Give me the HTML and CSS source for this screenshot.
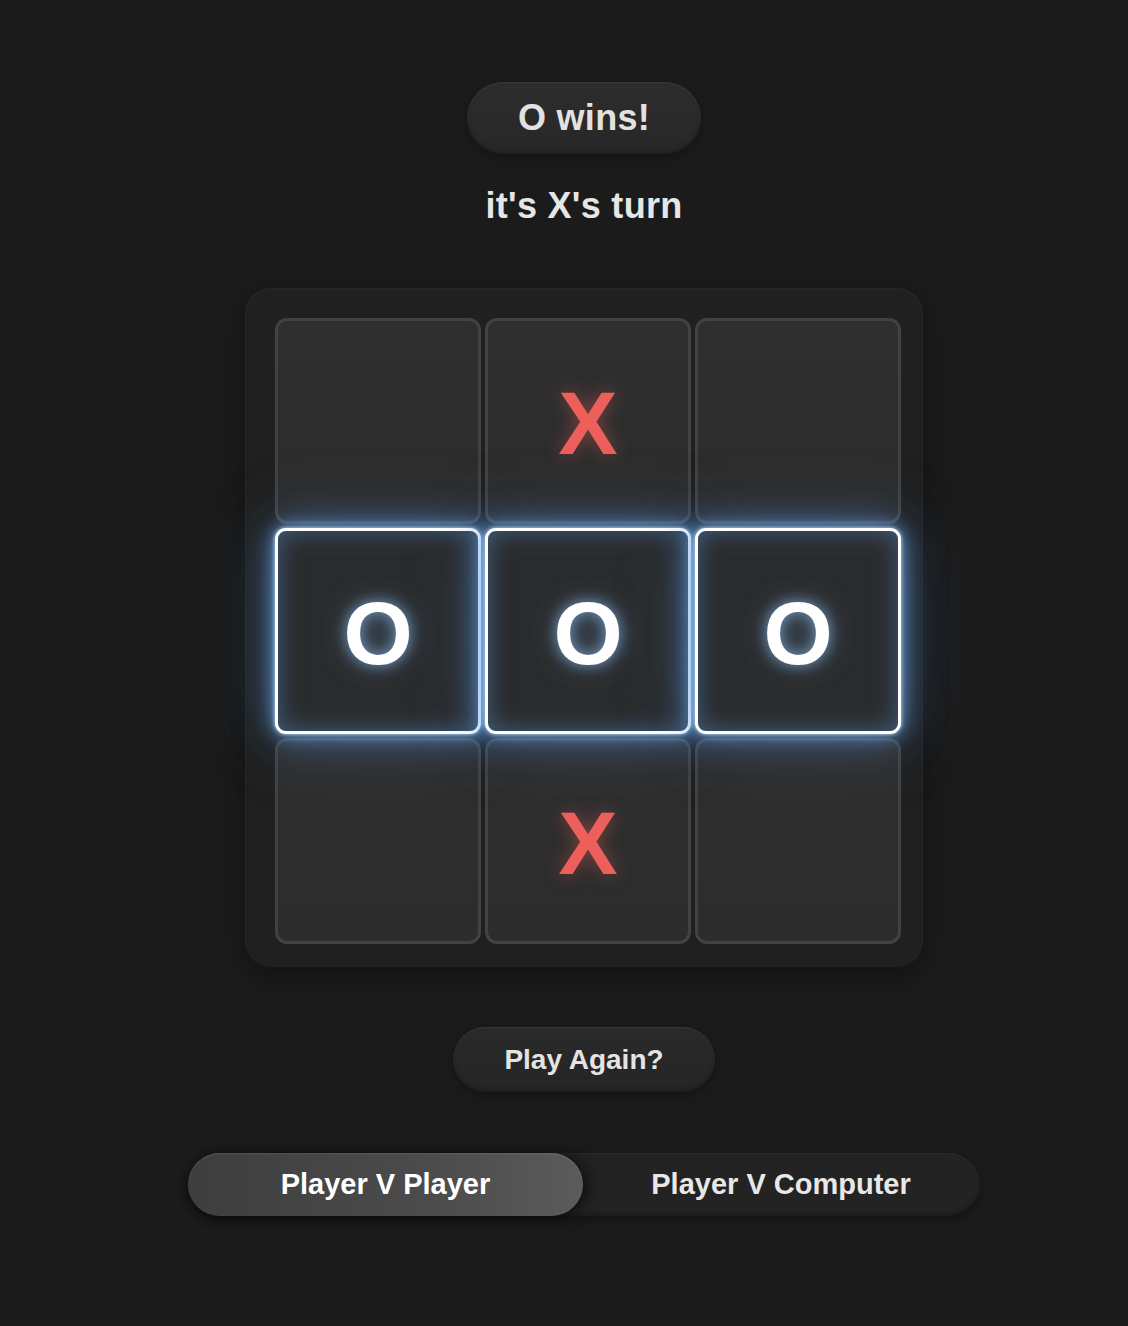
FILE: index.html
```html
<!DOCTYPE html>
<html>
<head>
<meta charset="utf-8">
<link rel="stylesheet" href="styles.css">
</head>
<body>
<main class="app">
  <div class="status">O wins!</div>
  <div class="turn">it's X's turn</div>
  <div class="board">
    <div class="cell"></div>
    <div class="cell x">X</div>
    <div class="cell"></div>
    <div class="cell o win">O</div>
    <div class="cell o win">O</div>
    <div class="cell o win">O</div>
    <div class="cell"></div>
    <div class="cell x">X</div>
    <div class="cell"></div>
  </div>
  <button class="again">Play Again?</button>
  <div class="mode">
    <div class="seg active">Player V Player</div>
    <div class="seg">Player V Computer</div>
  </div>
</main>
</body>
</html>
```

FILE: styles.css
```css
* { box-sizing: border-box; }
html, body { margin: 0; padding: 0; background: #1b1b1b; }
body {
  font-family: "Liberation Sans", Arial, sans-serif;
  font-weight: bold;
  color: #e4e4e4;
  height: 1326px;
  overflow: hidden;
}
.app {
  display: flex;
  flex-direction: column;
  align-items: center;
  padding-top: 82px;
  padding-left: 40px;
}
.status {
  width: 234px;
  height: 72px;
  border-radius: 36px;
  background: linear-gradient(180deg, #2d2d2d 0%, #272727 100%);
  box-shadow: inset 0 1px 2px rgba(255,255,255,0.08), inset 0 -2px 4px rgba(0,0,0,0.25), 0 4px 10px rgba(0,0,0,0.25);
  display: flex;
  align-items: center;
  justify-content: center;
  font-size: 36px;
  color: #e2e2e2;
  letter-spacing: 0.3px;
}
.turn {
  margin-top: 31px;
  font-size: 36px;
  line-height: 41px;
  color: #e6e6e6;
  letter-spacing: 0.3px;
}
.board {
  margin-top: 62px;
  width: 678px;
  height: 679px;
  padding: 30px 22px 23px 30px;
  border-radius: 26px;
  background: #202020;
  box-shadow: inset 0 1px 3px rgba(255,255,255,0.06), 0 8px 24px rgba(0,0,0,0.35);
  display: grid;
  grid-template-columns: repeat(3, 206px);
  grid-template-rows: repeat(3, 206px);
  gap: 4px;
}
.cell {
  border: 3px solid #424242;
  border-radius: 12px;
  background: linear-gradient(180deg, #2f2f2f 0%, #2c2c2c 100%);
  display: flex;
  align-items: center;
  justify-content: center;
  font-size: 89px;
  line-height: 1;
}
.cell.x {
  color: #ec5f5b;
  text-shadow: 0 0 18px rgba(236,95,91,0.45);
  padding-top: 4px;
}
.cell.o {
  color: #ffffff;
  padding-top: 4px;
}
.cell.win {
  position: relative;
  z-index: 1;
  border-color: #ffffff;
  border-radius: 11px;
  background: #2a2b2c;
  box-shadow: 0 0 4px rgba(200,225,255,0.95), 0 0 18px rgba(110,170,235,0.85), 0 0 40px rgba(90,150,220,0.55), 0 0 80px rgba(80,140,210,0.25), inset 0 0 24px rgba(90,150,215,0.5);
  text-shadow: 0 0 14px rgba(150,200,255,0.7), 0 0 30px rgba(120,180,240,0.4);
}
.again {
  margin-top: 60px;
  width: 262px;
  height: 65px;
  border: none;
  border-radius: 33px;
  background: linear-gradient(180deg, #2a2a2a 0%, #252525 100%);
  box-shadow: inset 0 1px 2px rgba(255,255,255,0.08), inset 0 -2px 4px rgba(0,0,0,0.25), 0 4px 10px rgba(0,0,0,0.25);
  font-family: "Liberation Sans", Arial, sans-serif;
  font-weight: bold;
  font-size: 28px;
  color: #e4e4e4;
  padding: 0;
}
.mode {
  margin-top: 61px;
  width: 792px;
  height: 63px;
  border-radius: 32px;
  background: #232323;
  box-shadow: inset 0 1px 2px rgba(255,255,255,0.06), inset 0 -2px 4px rgba(0,0,0,0.3), 0 4px 10px rgba(0,0,0,0.25);
  display: flex;
}
.seg {
  flex: 0 0 396px;
  display: flex;
  align-items: center;
  justify-content: center;
  font-size: 29px;
  color: #e8e8e8;
}
.seg.active {
  flex-basis: 395px;
  border-radius: 32px;
  background: linear-gradient(90deg, #3e3e3e 0%, #4b4b4b 60%, #5b5b5b 100%);
  box-shadow: inset 0 1px 2px rgba(255,255,255,0.1), 0 2px 8px rgba(0,0,0,0.4), 8px 0 16px rgba(0,0,0,0.35);
  color: #ffffff;
}
```
